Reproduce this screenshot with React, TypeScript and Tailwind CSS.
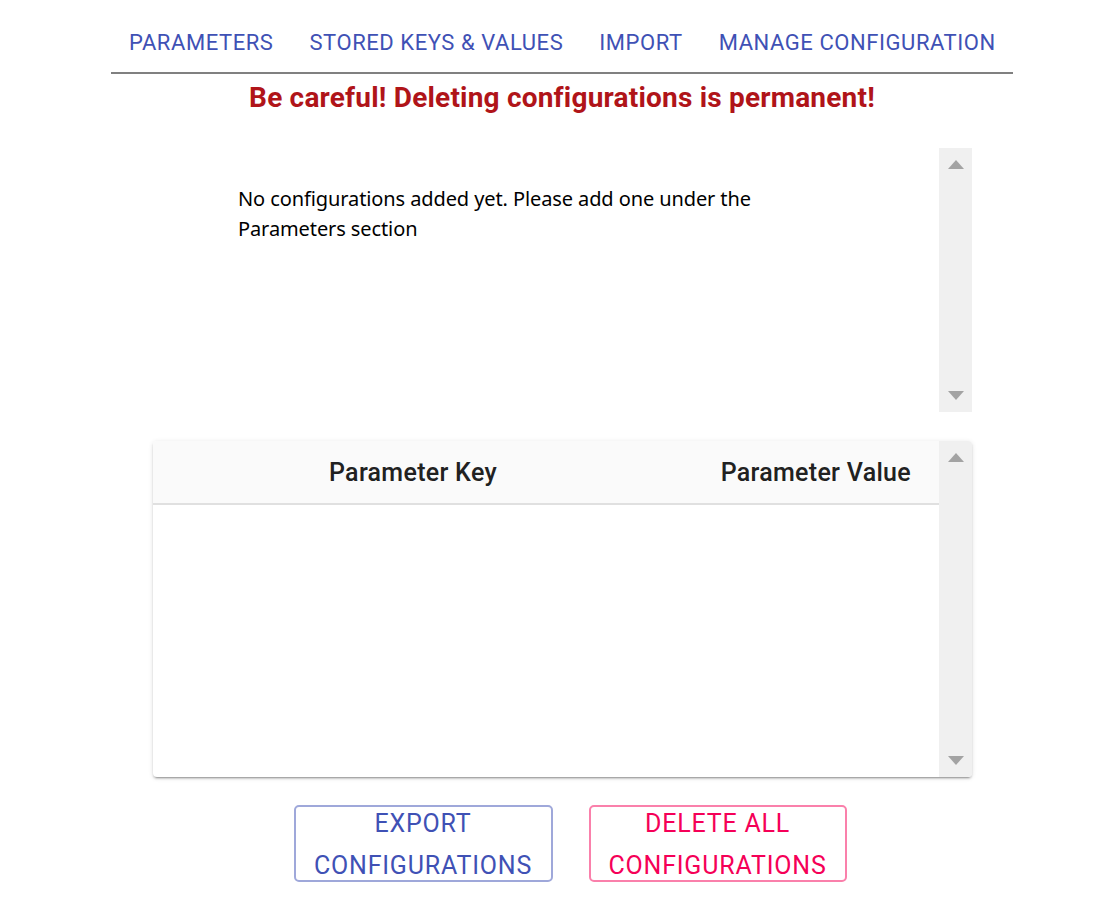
import React from "react";

function Scrollbar() {
  return (
    <div className="w-[33px] shrink-0 bg-[#f0f0f0] flex flex-col items-center justify-between py-[12px]">
      <svg width="16" height="9" viewBox="0 0 16 9">
        <polygon points="8,0 16,9 0,9" fill="#a3a3a3" />
      </svg>
      <svg width="16" height="9" viewBox="0 0 16 9">
        <polygon points="0,0 16,0 8,9" fill="#a3a3a3" />
      </svg>
    </div>
  );
}

export default function App() {
  const tabs = ["PARAMETERS", "STORED KEYS & VALUES", "IMPORT", "MANAGE CONFIGURATION"];
  return (
    <div className="min-h-[908px] bg-white font-['Roboto',sans-serif]">
      <div className="ml-[111px] w-[902px] flex flex-col">
        <div className="flex border-b-2 border-[#808080]">
          {tabs.map((t) => (
            <div
              key={t}
              className="px-[18px] pt-[31px] pb-[17px] text-[22px] leading-[24px] tracking-[0.56px] text-[#3f51b5] whitespace-nowrap"
            >
              {t}
            </div>
          ))}
        </div>
        <div className="mt-[8px] text-center text-[28px] leading-[32px] font-bold tracking-[0.2px] text-[#b01419]">
          Be careful! Deleting configurations is permanent!
        </div>
        <div className="ml-[42px] mt-[34px] w-[819px] h-[264px] flex">
          <div className="flex-1 pt-[36px] pl-[85px]">
            <p className="w-[560px] font-['Noto_Sans',sans-serif] text-[20px] leading-[30px] tracking-[-0.1px] text-black">
              No configurations added yet. Please add one under the Parameters section
            </p>
          </div>
          <Scrollbar />
        </div>
        <div className="ml-[42px] mt-[29px] w-[819px] h-[336px] flex rounded-[4px] overflow-hidden bg-white shadow-[0_3px_1px_-2px_rgba(0,0,0,0.2),0_2px_2px_0_rgba(0,0,0,0.14),0_1px_5px_0_rgba(0,0,0,0.12)]">
          <div className="flex-1">
            <div className="h-[64px] pt-[2px] bg-[#fafafa] border-b-2 border-[#e0e0e0] flex items-center justify-between pl-[176px] pr-[28px] text-[25px] font-medium tracking-[0.3px] text-[#212121]">
              <span>Parameter Key</span>
              <span>Parameter Value</span>
            </div>
          </div>
          <Scrollbar />
        </div>
        <div className="mt-[28px] flex justify-center gap-[36px] pl-[16px]">
          <button className="w-[259px] h-[77px] rounded-[5px] border-2 border-[#9fa8da] text-[#3f51b5] text-[25px] leading-[42px] tracking-[0.8px] flex flex-col items-center justify-center pt-[2px]">
            <span>EXPORT</span>
            <span>CONFIGURATIONS</span>
          </button>
          <button className="w-[258px] h-[77px] rounded-[5px] border-2 border-[#fa80ab] text-[#f50057] text-[25px] leading-[42px] tracking-[0.8px] flex flex-col items-center justify-center pt-[2px]">
            <span>DELETE ALL</span>
            <span>CONFIGURATIONS</span>
          </button>
        </div>
      </div>
    </div>
  );
}
